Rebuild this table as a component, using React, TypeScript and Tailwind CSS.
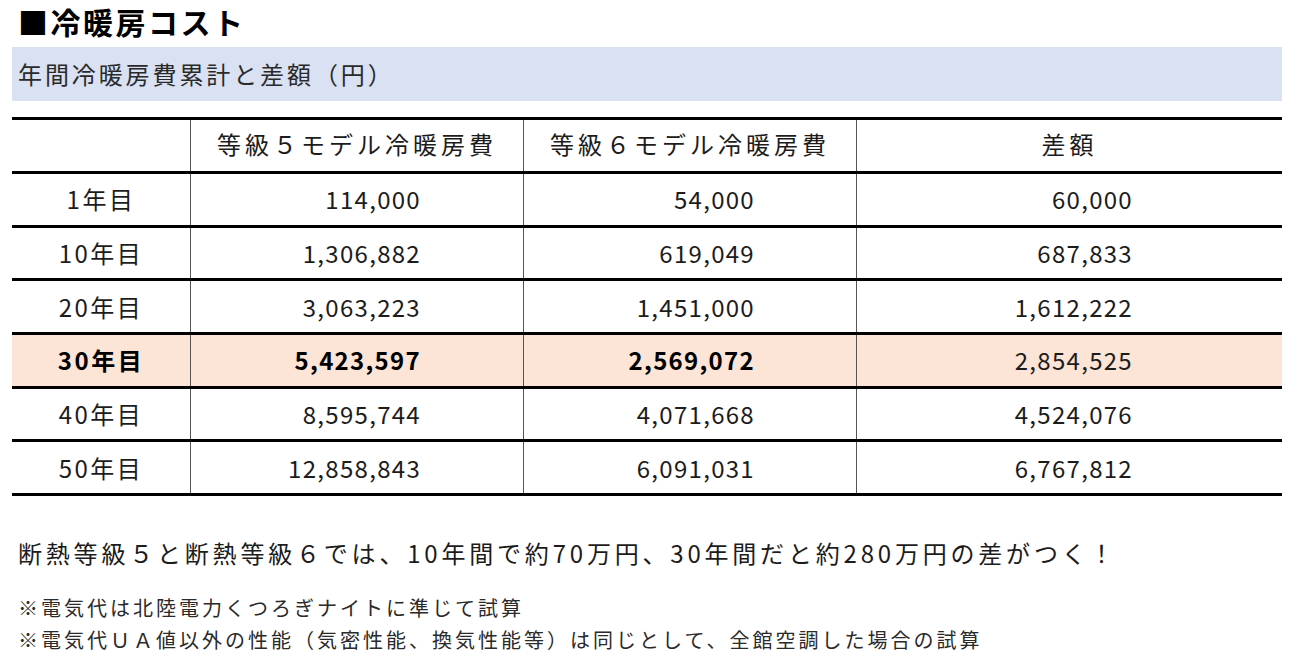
const rows = [
  { label: "1年目", a: "114,000", b: "54,000", c: "60,000" },
  { label: "10年目", a: "1,306,882", b: "619,049", c: "687,833" },
  { label: "20年目", a: "3,063,223", b: "1,451,000", c: "1,612,222" },
  { label: "30年目", a: "5,423,597", b: "2,569,072", c: "2,854,525", hl: true },
  { label: "40年目", a: "8,595,744", b: "4,071,668", c: "4,524,076" },
  { label: "50年目", a: "12,858,843", b: "6,091,031", c: "6,767,812" },
];

const font = { fontFamily: '"Noto Sans CJK JP", "Noto Sans", sans-serif' };

export default function App() {
  return (
    <div className="w-[1298px] h-[667px] bg-white text-[#1c1c1c] pl-[12px] pr-[16px]" style={font}>
      {/* 見出し */}
      <div className="h-[47px] pl-[6px] pb-[6px] flex items-center">
        <h1 className="text-[30px] font-bold tracking-[2.5px] text-black leading-none">■冷暖房コスト</h1>
      </div>
      <div className="h-[54px] bg-[#d9e1f2] flex items-center pl-[6px]">
        <span className="text-[24px] tracking-[2.9px] leading-none text-[#2a2a2a]">年間冷暖房費累計と差額（円）</span>
      </div>

      {/* 表 */}
      <div className="mt-[16px] border-t-[3px] border-black">
        <div className="grid grid-cols-[179px_333px_333px_1fr] h-[54px] border-b-[3px] border-black">
          <div className="border-r border-[#555]" />
          <div className="border-r border-[#555] pb-[4px] flex items-center justify-center text-[24px] tracking-[4px]">
            等級５モデル冷暖房費
          </div>
          <div className="border-r border-[#555] pb-[4px] flex items-center justify-center text-[24px] tracking-[4px]">
            等級６モデル冷暖房費
          </div>
          <div className="pb-[4px] flex items-center justify-center text-[24px] tracking-[4px]">差額</div>
        </div>
        {rows.map((r) => (
          <div
            key={r.label}
            className={`grid grid-cols-[179px_333px_333px_1fr] h-[53.7px] border-b-[3px] border-black ${r.hl ? "bg-[#fce4d6]" : ""}`}
          >
            <div
              className={`border-r border-[#555] flex items-center justify-center text-[24px] tracking-[2.5px] ${r.hl ? "font-bold text-black" : ""}`}
            >
              {r.label}
            </div>
            <div
              className={`border-r border-[#555] flex items-center justify-end pr-[102px] text-[24px] tracking-[1.3px] ${r.hl ? "font-bold text-black" : ""}`}
            >
              {r.a}
            </div>
            <div
              className={`border-r border-[#555] flex items-center justify-end pr-[101px] text-[24px] tracking-[1.3px] ${r.hl ? "font-bold text-black" : ""}`}
            >
              {r.b}
            </div>
            <div className="flex items-center justify-end pr-[149px] text-[24px] tracking-[1.3px]">{r.c}</div>
          </div>
        ))}
      </div>

      {/* 注記 */}
      <p className="mt-[44px] pl-[6px] text-[24px] tracking-[3.8px] leading-[26px]">
        断熱等級５と断熱等級６では、10年間で約70万円、30年間だと約280万円の差がつく！
      </p>
      <div className="mt-[26px] pl-[6px] text-[20px] tracking-[3px] leading-[32px] text-[#2a2a2a]">
        <p>※電気代は北陸電力くつろぎナイトに準じて試算</p>
        <p>※電気代ＵＡ値以外の性能（気密性能、換気性能等）は同じとして、全館空調した場合の試算</p>
      </div>
    </div>
  );
}
